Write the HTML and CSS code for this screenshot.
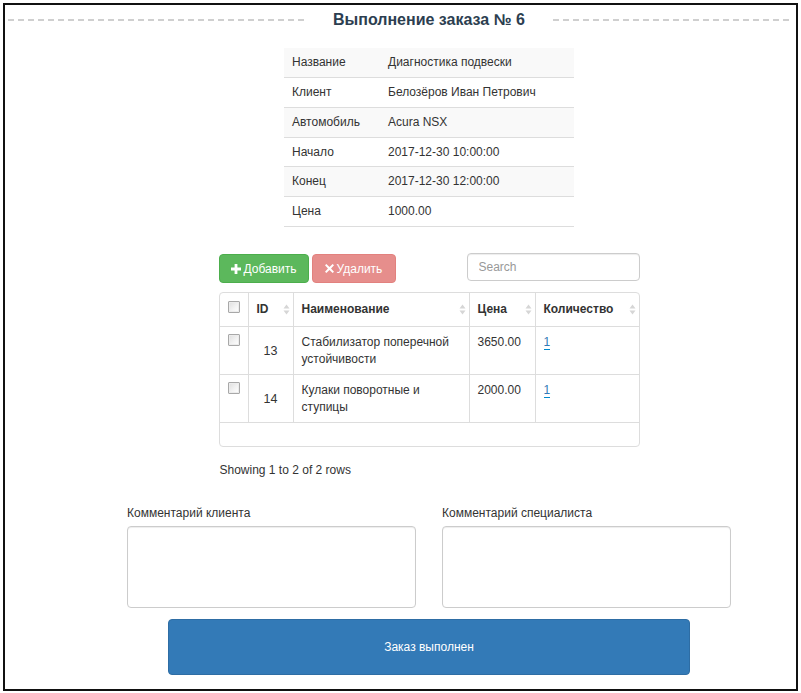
FILE: index.html
```html
<!DOCTYPE html>
<html lang="ru">
<head>
<meta charset="utf-8">
<title>Выполнение заказа № 6</title>
<link rel="stylesheet" href="styles.css">
</head>
<body>
<div class="frame">
  <div class="header">
    <span class="dash dash-left"></span>
    <h1 class="title">Выполнение заказа № 6</h1>
    <span class="dash dash-right"></span>
  </div>
  <div class="main">
    <table class="info">
      <tr><td class="info-label">Название</td><td>Диагностика подвески</td></tr>
      <tr><td class="info-label">Клиент</td><td>Белозёров Иван Петрович</td></tr>
      <tr><td class="info-label">Автомобиль</td><td>Acura NSX</td></tr>
      <tr><td class="info-label">Начало</td><td>2017-12-30 10:00:00</td></tr>
      <tr><td class="info-label">Конец</td><td>2017-12-30 12:00:00</td></tr>
      <tr><td class="info-label">Цена</td><td>1000.00</td></tr>
    </table>

    <div class="toolbar">
      <div class="btns">
        <button class="btn btn-success" type="button"><svg class="ico" viewBox="0 0 10 10" width="10" height="10"><path d="M3.6 0h2.8v3.6H10v2.8H6.4V10H3.6V6.4H0V3.6h3.6z" fill="#fff"/></svg>Добавить</button>
        <button class="btn btn-danger" type="button" disabled><svg class="ico" viewBox="0 0 10 10" width="9" height="9"><path d="M1.5 0L5 3.3 8.5 0 10 1.5 6.7 5 10 8.5 8.5 10 5 6.7 1.5 10 0 8.5 3.3 5 0 1.5z" fill="#fff"/></svg>Удалить</button>
      </div>
      <input class="search" type="text" placeholder="Search">
    </div>

    <div class="grid-wrap">
      <table class="grid">
        <thead>
          <tr>
            <th class="c-check"><span class="chk"></span></th>
            <th class="c-id"><div class="th-inner">ID<svg class="sort" viewBox="0 0 7 11" width="7" height="11"><path d="M0.5 4.5L3.5 0.5 6.5 4.5zM0.5 6.5L3.5 10.5 6.5 6.5z"/></svg></div></th>
            <th class="c-name"><div class="th-inner">Наименование<svg class="sort" viewBox="0 0 7 11" width="7" height="11"><path d="M0.5 4.5L3.5 0.5 6.5 4.5zM0.5 6.5L3.5 10.5 6.5 6.5z"/></svg></div></th>
            <th class="c-price"><div class="th-inner">Цена<svg class="sort" viewBox="0 0 7 11" width="7" height="11"><path d="M0.5 4.5L3.5 0.5 6.5 4.5zM0.5 6.5L3.5 10.5 6.5 6.5z"/></svg></div></th>
            <th class="c-qty"><div class="th-inner">Количество<svg class="sort" viewBox="0 0 7 11" width="7" height="11"><path d="M0.5 4.5L3.5 0.5 6.5 4.5zM0.5 6.5L3.5 10.5 6.5 6.5z"/></svg></div></th>
          </tr>
        </thead>
        <tbody>
          <tr>
            <td><span class="chk"></span></td>
            <td class="cell-id">13</td>
            <td>Стабилизатор поперечной устойчивости</td>
            <td>3650.00</td>
            <td><a class="editable" href="#">1</a></td>
          </tr>
          <tr>
            <td><span class="chk"></span></td>
            <td class="cell-id">14</td>
            <td>Кулаки поворотные и ступицы</td>
            <td>2000.00</td>
            <td><a class="editable" href="#">1</a></td>
          </tr>
        </tbody>
      </table>
    </div>

    <div class="pagination">Showing 1 to 2 of 2 rows</div>

    <div class="comments">
      <div class="field">
        <label class="field-label">Комментарий клиента</label>
        <textarea class="field-area"></textarea>
      </div>
      <div class="field">
        <label class="field-label">Комментарий специалиста</label>
        <textarea class="field-area"></textarea>
      </div>
    </div>

    <button class="done" type="button">Заказ выполнен</button>
  </div>
</div>
</body>
</html>
```

FILE: styles.css
```css
* { box-sizing: border-box; }

html, body {
  margin: 0;
  padding: 0;
  background: #fff;
}

body {
  font-family: "Liberation Sans", Arial, sans-serif;
  font-size: 12px;
  line-height: 17px;
  color: #333;
}

.frame {
  margin: 3px;
  width: 795px;
  height: 688px;
  border: 2px solid #111;
}

/* header */
.header {
  display: flex;
  align-items: center;
  height: 20px;
  margin-top: 5px;
  padding: 0 3px;
}

.dash {
  display: block;
  height: 2px;
  background: repeating-linear-gradient(to right, #cfcfcf 0 6px, transparent 6px 10px);
}

.dash-left {
  flex: none;
  width: 297px;
}

.dash-right {
  flex: 1;
}

.title {
  margin: 0 28px;
  font-size: 16px;
  line-height: 20px;
  font-weight: bold;
  color: #2c3e50;
  white-space: nowrap;
}

/* main column */
.main {
  margin-left: 122px;
  width: 604px;
}

/* info table */
.info {
  width: 290px;
  margin: 18px auto 0;
  border-collapse: collapse;
}

.info td {
  padding: 7px 8px;
  line-height: 14.84px;
  border-top: 1px solid #ddd;
  vertical-align: top;
}

.info tr:first-child td {
  border-top: 0;
}

.info tr:last-child td {
  border-bottom: 1px solid #ddd;
}

.info tr:nth-child(odd) td {
  background: #f9f9f9;
}

.info-label {
  width: 96px;
}

/* toolbar */
.toolbar {
  width: 421px;
  margin: 26px auto 0;
  height: 30px;
  display: flex;
  justify-content: space-between;
  align-items: flex-start;
}

.btns {
  display: flex;
  gap: 3px;
  margin-top: 1px;
}

.btn {
  display: inline-flex;
  align-items: center;
  gap: 3px;
  height: 29px;
  padding: 0 11px;
  font-family: "Liberation Sans", Arial, sans-serif;
  font-size: 12px;
  color: #fff;
  border: 1px solid transparent;
  border-radius: 4px;
  cursor: pointer;
}

.btn-success {
  background: #5cb85c;
  border-color: #4cae4c;
}

.btn-danger {
  background: #d9534f;
  border-color: #d43f3a;
  opacity: 0.65;
  padding: 0 13px 0 12px;
}

.ico {
  display: block;
  flex: none;
}

.search {
  width: 173px;
  height: 28px;
  padding: 0 11px;
  font-family: "Liberation Sans", Arial, sans-serif;
  font-size: 12px;
  color: #555;
  border: 1px solid #ccc;
  border-radius: 4px;
  box-shadow: inset 0 1px 1px rgba(0, 0, 0, 0.075);
  outline: none;
}

.search::placeholder {
  color: #999;
}

/* data grid */
.grid-wrap {
  width: 421px;
  height: 155px;
  margin: 9px auto 0;
  border: 1px solid #ddd;
  border-radius: 4px;
  overflow: hidden;
}

.grid {
  width: 419px;
  table-layout: fixed;
  border-collapse: separate;
  border-spacing: 0;
}

.grid th,
.grid td {
  border-bottom: 1px solid #ddd;
  border-left: 1px solid #ddd;
  text-align: left;
  vertical-align: top;
}

.grid th:first-child,
.grid td:first-child {
  border-left: 0;
}

.grid th {
  padding: 8px 3px 8px 8px;
  font-weight: bold;
  line-height: 17px;
  height: 34px;
}

.grid td {
  padding: 7px 8px 6px 8px;
  line-height: 17px;
  height: 48px;
}

.c-check { width: 28px; }
.c-id { width: 45px; }
.c-name { width: 176px; }
.c-price { width: 66px; }
.c-qty { width: 104px; }

.th-inner {
  display: flex;
  justify-content: space-between;
  align-items: center;
}

.sort {
  display: block;
  fill: #d6d6d6;
  flex: none;
}

.grid td.cell-id {
  text-align: center;
  vertical-align: middle;
  padding: 7px 4px 6px 4px;
  font-size: 12.5px;
}

.chk {
  display: block;
  width: 12px;
  height: 12px;
  border: 1px solid #a8a8a8;
  border-radius: 1px;
  background: linear-gradient(135deg, #dedede 0%, #f4f4f4 60%, #fff 100%);
  box-shadow: inset 0 0 0 1px #ececec;
}

.editable {
  color: #337ab7;
  text-decoration: none;
  border-bottom: 1px dashed #0088cc;
}

/* pagination */
.pagination {
  width: 421px;
  margin: 15px auto 0;
  padding-left: 1px;
  line-height: 17px;
}

/* comments */
.comments {
  display: flex;
  gap: 26px;
  margin-top: 26px;
}

.field {
  display: flex;
  flex-direction: column;
  width: 289px;
}

.field-label {
  display: block;
  line-height: 17px;
  margin-bottom: 4px;
}

.field-area {
  display: block;
  width: 289px;
  height: 82px;
  resize: none;
  border: 1px solid #ccc;
  border-radius: 4px;
  box-shadow: inset 0 1px 1px rgba(0, 0, 0, 0.075);
  font-family: "Liberation Sans", Arial, sans-serif;
  font-size: 12px;
  padding: 6px 10px;
}

.done {
  display: block;
  width: 522px;
  height: 56px;
  margin: 11px auto 0;
  background: #337ab7;
  border: 1px solid #2e6da4;
  border-radius: 4px;
  color: #fff;
  font-family: "Liberation Sans", Arial, sans-serif;
  font-size: 12px;
  cursor: pointer;
}
```
